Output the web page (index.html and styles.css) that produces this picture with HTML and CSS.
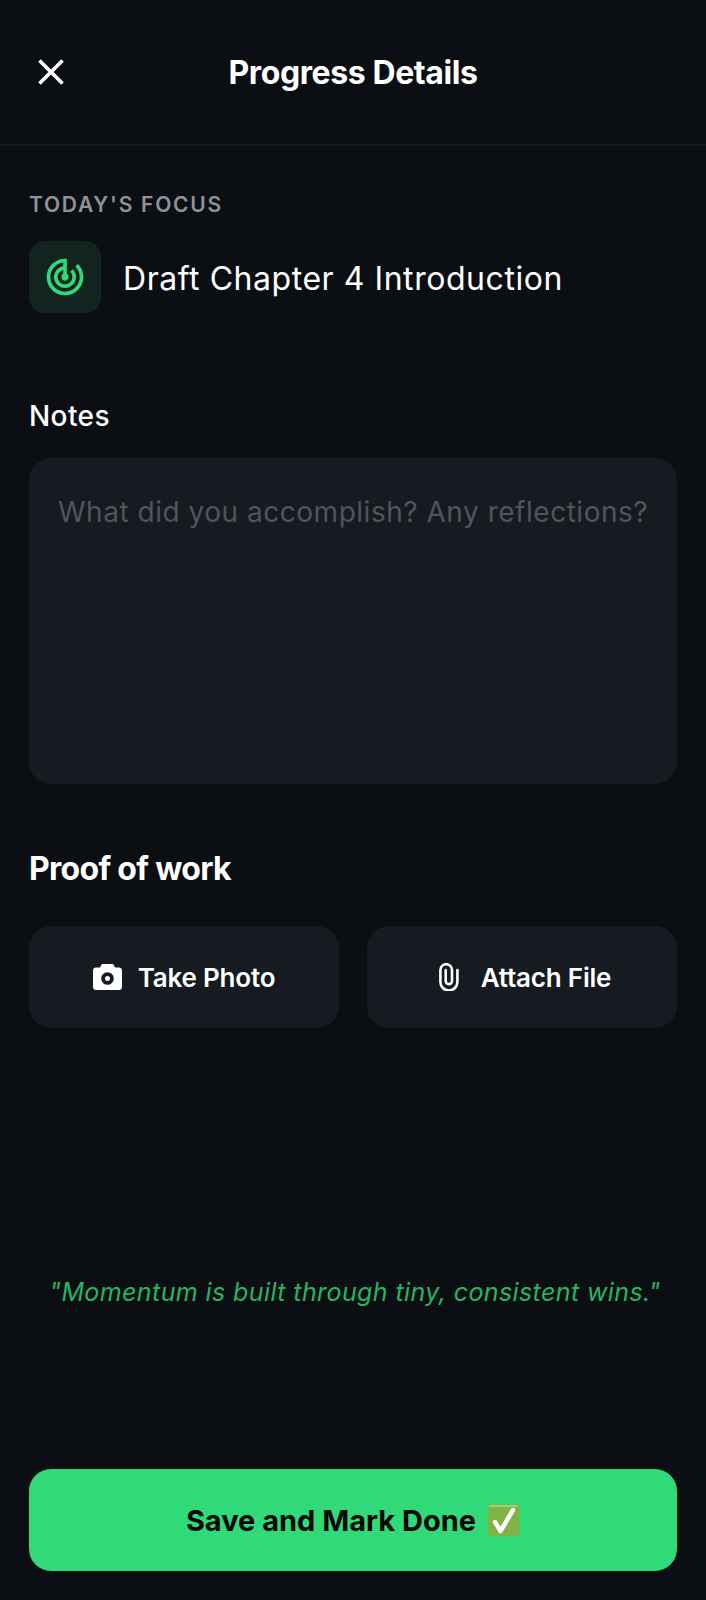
FILE: index.html
```html
<!DOCTYPE html>
<html lang="en">
<head>
    <meta charset="UTF-8">
    <meta name="viewport" content="width=device-width, initial-scale=1.0">
    <title>Progress Details</title>
    <link rel="stylesheet" href="styles.css">
</head>
<body>
    <header class="topbar">
        <svg class="close-icon" viewBox="0 0 24 24"><path d="M19 6.41 17.59 5 12 10.59 6.41 5 5 6.41 10.59 12 5 17.59 6.41 19 12 13.41 17.59 19 19 17.59 13.41 12z"/></svg>
        <h1>Progress Details</h1>
    </header>

    <main class="content">
        <div class="focus-label">TODAY'S FOCUS</div>
        <div class="focus-row">
            <div class="focus-icon">
                <svg viewBox="0 0 24 24"><path d="M19.07 4.93l-1.41 1.41C19.1 7.79 20 9.79 20 12c0 4.42-3.58 8-8 8s-8-3.58-8-8c0-4.08 3.05-7.44 7-7.93v2.02C8.16 6.57 6 9.03 6 12c0 3.31 2.69 6 6 6s6-2.69 6-6c0-1.66-.67-3.16-1.76-4.24l-1.41 1.41C15.55 9.9 16 10.9 16 12c0 2.21-1.79 4-4 4s-4-1.79-4-4c0-1.86 1.28-3.41 3-3.86v2.14c-.6.35-1 .98-1 1.72 0 1.1.9 2 2 2s2-.9 2-2c0-.74-.4-1.38-1-1.72V2h-1C6.48 2 2 6.48 2 12s4.48 10 10 10 10-4.48 10-10c0-2.76-1.12-5.26-2.93-7.07z"/></svg>
            </div>
            <div class="focus-title">Draft Chapter 4 Introduction</div>
        </div>

        <div class="notes-label">Notes</div>
        <div class="notes-box">What did you accomplish? Any reflections?</div>

        <h2>Proof of work</h2>
        <div class="proof-buttons">
            <div class="proof-btn">
                <svg class="camera-icon" viewBox="0 0 29 26"><path fill-rule="evenodd" d="M10 0h9c1 0 1.6.5 2 1.4L22 3.6h4c1.7 0 3 1.3 3 3V23c0 1.7-1.3 3-3 3H3c-1.7 0-3-1.3-3-3V6.6c0-1.7 1.3-3 3-3h4l1-2.2C8.4.5 9 0 10 0zm4.5 8.2a6.3 6.3 0 1 0 0 12.6 6.3 6.3 0 0 0 0-12.6zm0 3.8a2.5 2.5 0 1 1 0 5 2.5 2.5 0 0 1 0-5z"/></svg>
                <span>Take Photo</span>
            </div>
            <div class="proof-btn">
                <svg class="clip-icon" viewBox="0 0 20 28"><path d="M18.4 7V19a8.5 8.5 0 0 1-17 0V7a5.8 5.8 0 0 1 11.6 0V18a3.15 3.15 0 0 1-6.3 0V7"/></svg>
                <span>Attach File</span>
            </div>
        </div>

        <p class="quote">"Momentum is built through tiny, consistent wins."</p>

        <div class="save-btn">
            <span>Save and Mark Done</span>
            <svg class="check-icon" viewBox="0 0 33 33">
                <rect x="0.5" y="0.5" width="32" height="32" rx="3" fill="#7fb344"/>
                <path d="M2 2h29" stroke="#a5cc78" stroke-width="2" fill="none"/>
                <path d="M8 18l5.5 9L26 6" stroke="#fff" stroke-width="4.5" stroke-linecap="round" stroke-linejoin="round" fill="none"/>
            </svg>
        </div>
    </main>
</body>
</html>
```

FILE: styles.css
```css
* {
    box-sizing: border-box;
}
body {
    font-family: Inter, "Liberation Sans", sans-serif;
    color: #fff;
    background-color: #0b0e13;
    margin: 0;
    min-height: 100vh;
}
h1, h2, p {
    margin: 0;
}
.topbar {
    display: grid;
    grid-template-columns: 1fr auto 1fr;
    align-items: center;
    height: 146px;
    padding: 0 29px;
    border-bottom: 2px solid #181c22;
}
.topbar h1 {
    grid-column: 2;
    grid-row: 1;
    font-size: 32px;
    font-weight: 700;
    letter-spacing: -0.4px;
}
.close-icon {
    grid-column: 1;
    grid-row: 1;
    width: 44px;
    height: 44px;
    fill: #fff;
}
.content {
    padding: 47px 29px 0;
}
.focus-label {
    font-size: 21px;
    font-weight: 600;
    line-height: 24px;
    letter-spacing: 1.75px;
    color: #8f9299;
}
.focus-row {
    display: flex;
    align-items: center;
    gap: 22px;
    margin-top: 24px;
}
.focus-icon {
    display: flex;
    align-items: center;
    justify-content: center;
    width: 72px;
    height: 72px;
    border-radius: 16px;
    background-color: #11241f;
}
.focus-icon svg {
    width: 44px;
    height: 44px;
    fill: #31da78;
}
.focus-title {
    padding-top: 2px;
    font-size: 32px;
    font-weight: 400;
    letter-spacing: 0.55px;
}
.notes-label {
    margin-top: 86px;
    font-size: 28px;
    font-weight: 500;
    line-height: 34px;
    letter-spacing: 0.4px;
}
.notes-box {
    height: 326px;
    margin-top: 25px;
    padding: 37px 29px;
    border-radius: 22px;
    background-color: #161b22;
    font-size: 28px;
    line-height: 34px;
    letter-spacing: 0.52px;
    color: #50545b;
    white-space: nowrap;
}
h2 {
    margin-top: 66px;
    font-size: 32px;
    font-weight: 700;
    line-height: 38px;
    letter-spacing: -0.7px;
}
.proof-buttons {
    display: grid;
    grid-template-columns: 1fr 1fr;
    gap: 28px;
    margin-top: 38px;
}
.proof-btn {
    display: flex;
    align-items: center;
    justify-content: center;
    gap: 16px;
    height: 102px;
    border-radius: 22px;
    background-color: #161b22;
    font-size: 26px;
    font-weight: 600;
    letter-spacing: -0.2px;
}
.camera-icon {
    width: 29px;
    height: 26px;
    fill: #fff;
}
.clip-icon {
    width: 20px;
    height: 28px;
    margin-left: 6px;
    margin-right: 6px;
    fill: none;
    stroke: #fff;
    stroke-width: 2.6;
    stroke-linecap: round;
}
.quote {
    margin-top: 248px;
    padding-left: 4px;
    font-size: 25px;
    font-style: italic;
    line-height: 32px;
    letter-spacing: 0.4px;
    text-align: center;
    color: #27b564;
    white-space: nowrap;
}
.save-btn {
    display: flex;
    align-items: center;
    justify-content: center;
    gap: 11px;
    height: 102px;
    margin-top: 161px;
    border-radius: 22px;
    background-color: #31da78;
    color: #050807;
    font-size: 29px;
    font-weight: 700;
}
.check-icon {
    width: 33px;
    height: 33px;
}
```
